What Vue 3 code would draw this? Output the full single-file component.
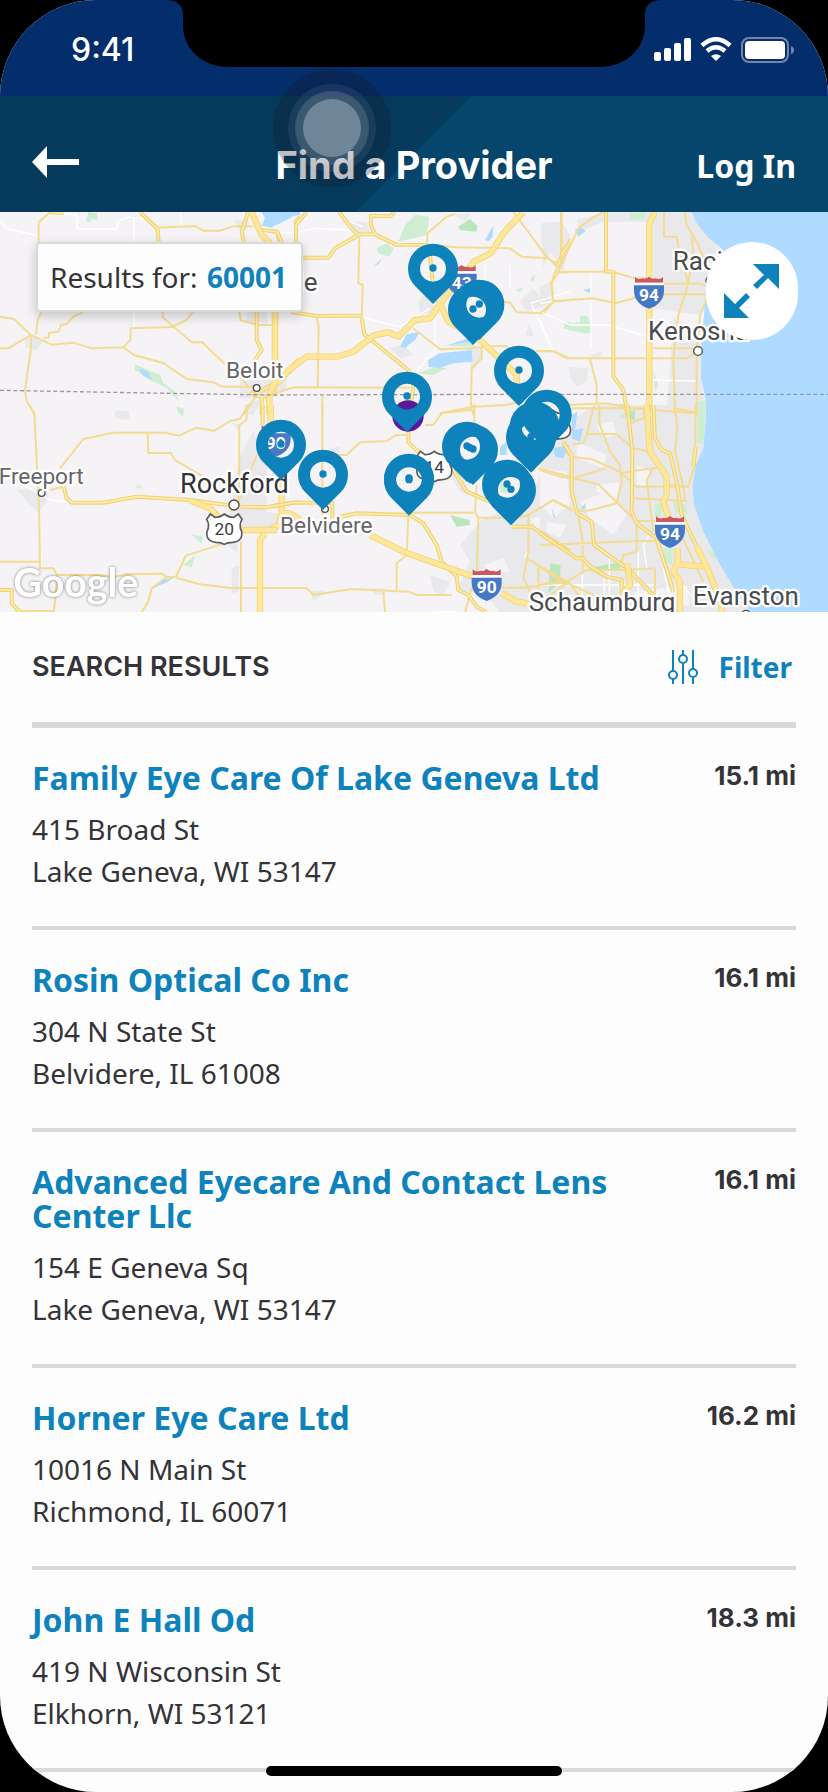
<script setup>
const providers = [
  { name: 'Family Eye Care Of Lake Geneva Ltd', street: '415 Broad St', city: 'Lake Geneva, WI 53147', distance: '15.1 mi' },
  { name: 'Rosin Optical Co Inc', street: '304 N State St', city: 'Belvidere, IL 61008', distance: '16.1 mi' },
  { name: 'Advanced Eyecare And Contact Lens Center Llc', street: '154 E Geneva Sq', city: 'Lake Geneva, WI 53147', distance: '16.1 mi' },
  { name: 'Horner Eye Care Ltd', street: '10016 N Main St', city: 'Richmond, IL 60071', distance: '16.2 mi' },
  { name: 'John E Hall Od', street: '419 N Wisconsin St', city: 'Elkhorn, WI 53121', distance: '18.3 mi' },
]

// The map is made of six tiles; each tile's shapes use its own origin.
const tiles = [
  {
    x: 0, y: -21,
    urban: 'M75 400 105 395 130 410 110 435 75 425ZM740 321 800 321 805 355 740 350ZM705 45 745 45 740 75 710 70ZM720 530 860 515 860 550 790 580 720 580ZM345 618H387V630H345ZM735 600 790 580 760 630 730 630Z',
    green: 'M265 21 290 25 293 45 275 42 270 52 258 50ZM405 478 480 510 490 535 525 560 538 592 500 548 450 525 405 495ZM530 605 552 612 548 630 535 625Z',
    water: 'M415 490 445 500 455 525 430 512ZM785 21H900V30L860 35 838 50 815 68 785 62 795 40Z',
    white: 'M0 50 20 70 116 93M130 22 232 30V72H350L355 48 385 36 430 42M402 36V112M543 21V65M403 321V370M830 80 885 85',
    minor: 'M150 21 116 52V112M473 68 585 63 610 77H660L700 64H760M0 335 42 342 93 390 155 419 220 413 275 430 370 427 392 403V370L515 366 560 345 578 321M0 430H25L93 390M125 321 113 345 108 388M130 400 147 396V383L175 380 183 360 200 357 220 335 250 322M488 321V337L575 412H607L675 478M370 427 402 450 490 474 560 522 640 532 665 545H760M93 390V430L75 555 80 588 105 630M718 321 722 346 775 360H815M825 565 880 547H900M770 570 730 630M720 515 745 545',
    medium: 'M150 21 192 25M420 21 473 72 476 112M745 21 725 80 732 112M785 75 832 80 838 112M900 35 888 50V112M770 321V405L785 435 765 465V480M750 560 770 572 800 575M785 575V630M780 560 815 540',
    highway: 'M755 21 785 90 810 115M825 321V540L808 575V630M825 540 860 505 900 465',
  },
  {
    x: 810, y: -21,
    urban: 'M815 55 875 50 900 90 880 200 835 130 815 120ZM240 50 290 50 300 80 250 85ZM750 290 790 250 825 300 770 320ZM360 430 400 420 430 450 390 460ZM765 390 778 355 792 395ZM445 290 470 260 500 320 450 330ZM550 30 600 25 590 50ZM590 430 640 430 630 470 605 500Z',
    green: 'M435 30 478 35 470 90 385 110 405 60ZM320 130 350 115 370 130 360 155 325 145ZM735 252 760 248 750 262ZM780 225 793 208 793 230ZM440 505 500 485 530 490 490 510ZM880 355 900 350V380ZM530 423 600 412 620 425Z',
    park: 'M565 65 600 42 622 62 620 80 570 75Z',
    water: 'M310 185 340 155 325 178ZM645 105 670 62 668 95 655 108ZM390 425 410 388 450 380 435 405 405 428ZM475 465 510 445 605 435 608 470 550 475 505 490 475 485ZM525 423 600 398 605 410ZM0 21H80L60 40 20 60 0 55Z',
    white: 'M90 80 130 70 240 75M240 50 280 65M280 338 390 365 480 310M780 295 900 260M785 300 850 440M645 180V290M495 340V440L470 460 440 500M720 180V250',
    minor: 'M470 120 560 127 720 130 755 155 835 160 862 185M555 27 530 35 472 85V120M268 90 265 235 278 240 275 340M140 338 146 365 143 545M430 370 510 433 600 430 680 423H710L715 440 850 438 900 460M635 430V460L605 490 603 600 610 630M0 570 70 547 420 548M510 625 610 605 710 600 745 590M730 21 830 155M900 100 862 185 845 230 850 290 820 325 740 322 720 293 700 290M862 203 900 201M875 21V180M850 290 900 285M157 572V630',
    medium: 'M110 21 78 60V112M95 158H175L195 130 240 105 265 90 240 65 208 21M265 88H315L378 119 472 120M315 88 303 62V32L360 34 375 21M0 78 22 80 35 112M65 321 138 333 275 332M275 340 283 388 420 500M430 540 425 590M480 150 488 230M862 185 880 140 900 110',
    highway: 'M15 321V530L0 560M760 21 700 85 662 145 612 170 515 290 480 340 435 345 385 395 355 382 310 392 250 440 200 455H110L50 500M505 285 535 350 620 395 740 510V535',
  },
  {
    x: 1620, y: -21,
    urban: 'M340 21H455L505 98 560 150 510 300 480 330 340 310ZM110 45 200 21H330V50H190L120 80ZM5 55 65 50 70 90 30 140 10 190ZM85 485 145 490 140 530 110 545 90 515ZM400 340 490 400 483 520 498 630H380ZM0 245 30 230 40 290 0 310ZM150 450 185 440 175 465Z',
    green: 'M75 355 120 352V332H142L155 365V385H130L70 370ZM270 25 315 21V40L270 45ZM340 500 355 540 345 560ZM475 590 498 585V630H478ZM240 595 262 600V630H245Z',
    water: 'M105 75 120 65 137 78 115 95ZM130 255 150 250V265Z',
    white: 'M0 320 90 360 200 360 330 395M153 200V430M340 525 470 528M0 345 40 440M0 295 40 290',
    minor: 'M63 21V185M190 21 155 40 115 70 50 210 33 235 40 290 0 325M50 200H215L285 220H320M372 21V95H410L420 150 445 235 415 330 400 460 405 630M435 21 440 60 475 120 490 160M340 236H480L497 243M340 268H505M500 280 480 330 470 440V630M40 288 160 280 225 295 300 275H330M0 438H40L80 460H440L470 440M340 430H460M150 462 170 540V600M455 95 460 150 445 230M80 600 200 595 280 610 460 625M0 130 30 165 55 175',
    medium: 'M198 21V200H220V515L250 555 262 630',
    highway: 'M345 21 328 55V590L318 630',
  },
  {
    x: 0, y: 579,
    urban: 'M345 20H387V45L345 40ZM50 255 140 250 145 280 115 325ZM402 250 415 235 430 250ZM720 150 760 80 800 180 800 320 870 330 870 375 700 370 690 330ZM660 400H715L710 445ZM695 490 718 480 715 560 695 565ZM690 50 720 60 715 75Z',
    green: 'M532 5 552 12 548 38ZM575 388 610 395 603 415ZM550 480 585 450 575 487Z',
    water: 'M455 552 490 525 525 516 500 532Z',
    white: 'M80 245 150 285 215 293',
    minor: 'M88 0 103 28 117 300 120 490H160L172 512 162 621M180 190 250 102 340 83H495L538 92 588 68 643 77 690 48 720 42 745 0M443 83 445 144H512L525 165 610 215M740 0V45L718 60 717 300M0 470H118M170 510H300L340 516 380 508 485 506 500 516H527L545 480 557 452 690 410M500 516 455 550 445 590 425 621M527 518 600 538 690 549H900M723 410V621M45 618H162M770 150 725 270 690 320M150 255 190 245M0 215 60 225',
    medium: 'M0 555H35V595L60 621M188 235 200 280 215 293H310L410 275 570 285 620 292 720 305 800 307 840 298 900 292M788 0V60',
    highway: 'M812 0V60M570 287 630 310 655 335M725 375H810L835 360 845 325V220M845 325H870L900 345M795 385 780 405V621',
  },
  {
    x: 810, y: 579,
    urban: 'M640 340 770 300 820 190 900 170V621H690L640 560 560 560 600 470 570 420ZM480 510 540 530 520 570 490 560ZM180 130 210 125 205 150H180ZM120 560 160 555V570L130 585ZM310 550H345V570H310ZM540 200 570 190 600 270 570 260Z',
    land: 'M850 180 900 170V260L860 270ZM640 480 700 460 720 500 660 500ZM780 340 840 330 880 390 800 370Z',
    green: 'M815 215 850 210 845 240 815 240ZM690 235 715 240 710 265 692 262Z',
    park: 'M540 330 598 345 600 360 560 365ZM840 475 875 480 870 530 835 540Z',
    water: 'M690 125 710 110V150H690ZM850 115 900 90V130L880 160 850 150ZM845 300 860 345 850 320ZM820 415 855 400 835 405Z',
    white: 'M765 460 772 440M495 621H560',
    minor: 'M157 0V330M175 150H230L270 112 350 108 380 90H410M465 60H490L515 25 600 15 613 0V70M415 260V330L410 450 380 475V555M425 323H610M625 338H740L775 330 850 285 900 310M620 240 615 320 625 340 620 520 605 550 585 621M0 549H110L130 570 245 552 415 560 440 570H545M340 560 345 621M775 330V440L760 520 780 560M770 460 900 535M697 548H775L880 525M805 480V621M875 417H900M805 190 900 215',
    medium: 'M415 80V112L450 145M550 195 590 260 660 290M0 305 70 293H187V340L260 325 420 330 460 355 500 420 515 470 560 515 565 555 595 570 620 605 650 621M725 365H785L900 440M880 110 900 150',
    highway: 'M300 390 400 440 610 515M695 565 740 590 790 598M0 375H20',
  },
  {
    x: 1620, y: 579,
    urban: 'M0 180 100 40 170 0H500L490 130 458 240 490 380 540 480 630 621H0Z',
    land: 'M0 190 80 200 90 300 40 340 0 300ZM120 290 200 260 260 330 220 390 150 340ZM110 110 200 150 190 190 110 160ZM170 240 240 230 230 290 170 260ZM20 350 80 360 60 400 20 380ZM290 180 330 200 320 240 290 240ZM170 60 220 50 230 90 190 100ZM280 560 440 540 450 600 300 600Z',
    green: 'M238 30 285 15 282 45 245 40ZM475 0H497L490 118 472 115ZM345 295 370 300 360 340H345ZM400 290 440 300V325L405 320ZM370 430H400L395 480 375 470ZM505 435 525 445 530 462 507 450Z',
    park: 'M165 485 235 473 240 490 180 500ZM30 475 62 480 60 530 25 565ZM262 18 285 15V45H262Z',
    water: 'M95 30 112 20 105 75 130 70 120 110 95 100ZM40 130 90 120 70 160 45 155ZM35 305 48 345 40 335ZM120 315 135 295 138 310Z',
    white: 'M330 385 310 420 322 495M208 460V570M0 540H350M295 440V590M370 490 385 560M127 510V580M193 510V590M430 545 470 590',
    minor: 'M95 10H330M400 10 465 22M405 0 412 70 405 140 430 245 435 290M467 0 465 180 445 245H290L245 205M162 0 140 90 130 115 98 118M140 87H228L280 130 330 140M100 157 155 162 245 203 370 185M100 220 195 190M0 195 60 215 100 220 175 238 290 350M178 0V55L210 140 240 180 245 230 230 295 155 315 110 320M340 190 320 225 340 380M0 310 38 285 100 318M280 280 440 288M290 348H345M115 330 128 410V500M0 420 300 408H350M290 350V440L250 450 240 490M0 485 50 520 160 570M0 540 80 530 140 495H260L340 490M345 490V570M420 380 490 530M385 240 430 245M20 580 85 530 130 590M150 490 200 520M260 60 330 30',
    medium: 'M262 0 277 140 275 320 290 355 350 400 400 560M72 115 95 150V260L112 325 155 350 162 420 262 490 340 570M0 385 110 460H130L145 480 200 515 245 525V560M340 0 345 100 365 135 390 145 410 230 425 330 470 425M467 125 460 185M352 410 395 540',
    highway: 'M320 0 330 140 380 215V270L370 290 385 335M413 430V470L400 500 420 530V621M413 478 495 485M470 425 500 485 545 600V621M262 475 270 540 245 570',
  },
]

const interstates = [
  { x: 1340, y: 159, n: '43' },
  { x: 1902, y: 194, n: '94' },
  { x: 782, y: 638, n: '90' },
  { x: 1965, y: 912, n: '94' },
  { x: 1415, y: 1071, n: '90' },
]
const usRoutes = [
  { x: 617, y: 904, n: '20' },
  { x: 1247, y: 716, n: '14' },
  { x: 1603, y: 593, n: '12' },
]
const towns = [
  { x: 953, y: 237, name: 'le', size: 'm', end: true },
  { x: 678, y: 499, name: 'Beloit', size: 's' },
  { x: -4, y: 815, name: 'Freeport', size: 's' },
  { x: 540, y: 844, name: 'Rockford', size: 'l', dark: true },
  { x: 840, y: 964, name: 'Belvidere', size: 's' },
  { x: 2018, y: 174, name: 'Racine', size: 'm' },
  { x: 1944, y: 384, name: 'Kenosha', size: 'm' },
  { x: 1586, y: 1196, name: 'Schaumburg', size: 'm' },
  { x: 2078, y: 1179, name: 'Evanston', size: 'm' },
]
const dots = [
  { x: 770, y: 528, r: 10 },
  { x: 125, y: 843, r: 10 },
  { x: 702, y: 879, r: 15 },
  { x: 2094, y: 417, r: 13 },
  { x: 975, y: 891, r: 10 },
  { x: 2130, y: 206, r: 12 },
  { x: 2238, y: 1208, r: 13 },
]
const pins = [
  [1299, 276], [1419, 399], [1438, 384], [1557, 582], [1221, 660],
  [843, 804], [969, 894], [1227, 911], [1227, 906],
  [1401, 810], [1410, 815], [1419, 819], [1640, 714],
  [1604, 750], [1593, 782], [1521, 924], [1533, 940],
]
</script>

<template>
  <div class="device">
    <div class="status">
      <span class="time">9:41</span>
      <svg class="notch" viewBox="0 0 496 67" aria-hidden="true">
        <path d="M0 0C11 0 17 5 17 14V27C18 50 37 67 63 67H433C459 67 478 50 479 27V14C479 5 485 0 496 0Z" />
      </svg>
      <div class="indicators">
        <svg width="38" height="26" viewBox="0 0 38 26" aria-hidden="true">
          <g fill="#fff">
            <rect x="0" y="15" width="7" height="9" rx="2" /><rect x="10" y="11" width="7" height="13" rx="2" />
            <rect x="20" y="6" width="7" height="18" rx="2" /><rect x="30" y="1" width="7" height="23" rx="2" />
          </g>
        </svg>
        <svg width="32" height="26" viewBox="0 0 32 26" aria-hidden="true">
          <path d="M2 8.500Q16-4 30 8.500M7 14Q16 6.500 25 14" fill="none" stroke="#fff" stroke-width="4.500" />
          <path d="M11 19Q16 15.500 21 19L16 24Z" fill="#fff" />
        </svg>
        <svg width="54" height="26" viewBox="0 0 54 26" aria-hidden="true">
          <rect x="2" y="1" width="46" height="24" rx="7" fill="none" stroke="#7186aa" stroke-width="2" />
          <rect x="5" y="4" width="40" height="18" rx="4" fill="#fff" />
          <path d="M51 9Q54 10 54 13T51 17Z" fill="#7186aa" />
        </svg>
      </div>
    </div>

    <header class="bar">
      <button class="back" type="button" aria-label="Back">
        <svg width="48" height="38" viewBox="0 0 48 38" aria-hidden="true">
          <path d="M0 16 15 0V13H47V19H15V32Z" fill="#fff" />
        </svg>
      </button>
      <h1>Find a Provider</h1>
      <a class="login" href="#login">Log In</a>
    </header>
    <div class="touch" aria-hidden="true"><i><i><i></i></i></i></div>

    <section class="map" aria-label="Map of results">
      <svg class="canvas" viewBox="0 0 2484 1200" preserveAspectRatio="xMidYMid slice">
        <rect width="2484" height="1200" fill="#f5f3f6" />
        <g v-for="(t, i) in tiles" :key="'a' + i" :transform="`translate(${t.x} ${t.y})`">
          <path :d="t.urban" fill="#e9e8ea" />
          <path v-if="t.land" :d="t.land" fill="#f5f3f6" />
          <path :d="t.green" fill="#cdeed0" />
          <path v-if="t.park" :d="t.park" fill="#b9e6ba" />
          <path :d="t.water" fill="#aedbff" />
        </g>
        <path d="M2075 0 2090 34 2125 77 2165 110 2150 209 2115 279 2105 379 2103 499 2118 569V609L2110 709 2088 759 2078 819 2082 879 2110 959 2160 1059 2200 1124 2250 1200H2484V0Z" fill="#aedbff" />
        <g v-for="(t, i) in tiles" :key="'b' + i" :transform="`translate(${t.x} ${t.y})`" class="roads">
          <path :d="t.white" class="white" />
          <path :d="t.minor" class="minor" />
          <path :d="t.medium" class="medium-edge" />
          <path :d="t.medium" class="medium" />
          <path :d="t.highway" class="highway-edge" />
          <path :d="t.highway" class="highway" />
        </g>
        <path d="M0 535 450 543 810 549 1500 547H2484" class="border" />
        <g class="dots"><circle v-for="d in dots" :key="d.x" :cx="d.x" :cy="d.y" :r="d.r" /></g>
        <text
          v-for="t in towns" :key="t.name" :x="t.x" :y="t.y"
          :class="['town', t.size, { dark: t.dark, end: t.end }]"
        >{{ t.name }}</text>
        <g v-for="s in interstates" :key="s.x" :transform="`translate(${s.x} ${s.y})`">
          <path d="M3 18V1L10 6Q18 9 26 5 36 9 45 0 54 9 64 5 72 9 80 6L87 1V18Z" fill="#cb5861" />
          <path d="M3 18H87L90 26H0Z" fill="#fff" />
          <path d="M0 26H90V42C90 70 70 88 45 96 20 88 0 70 0 42Z" fill="#4579c6" />
          <text x="45" y="73" class="route">{{ s.n }}</text>
        </g>
        <g v-for="s in usRoutes" :key="s.x" :transform="`translate(${s.x} ${s.y})`">
          <path d="M14 2 28 12Q44 12 56 2 68 12 84 12L98 2 109 18Q98 36 108 54 112 85 80 87 65 87 56 93 47 87 32 87 0 85 4 54 14 36 3 18Z" fill="#fff" stroke="#5b5b5f" stroke-width="5" />
          <text x="56" y="66" class="route us">{{ s.n }}</text>
        </g>
        <text x="40" y="1156" class="brand">Google</text>
        <circle cx="1224" cy="612" r="47" fill="#5a189a" />
        <g v-for="(p, i) in pins" :key="'p' + i" :transform="`translate(${p[0]} ${p[1]})`" fill="#0e82bb">
          <path fill-rule="evenodd" d="M0 0-53-53A75 75 0 1 1 53-53ZM0-145A39 39 0 1 0 0-67 39 39 0 1 0 0-145Z" />
          <circle cx="0" cy="-108" r="11" />
        </g>
      </svg>
      <div class="query">Results for: <a href="#zip">60001</a></div>
      <button class="expand" type="button" aria-label="Expand map">
        <svg width="56" height="56" viewBox="0 0 56 56" aria-hidden="true">
          <path d="M29 1 55 1V26L44 15 33 26 29 22 40 12ZM0 30 11 41 22 30 26 34 15 45 25 55H0Z" fill="#0e82bb" />
        </svg>
      </button>
    </section>

    <main>
      <div class="heading">
        <h2>SEARCH RESULTS</h2>
        <button class="filter" type="button">
          <svg width="32" height="34" viewBox="0 0 32 34" fill="none" stroke="#0e82bb" stroke-width="2" aria-hidden="true">
            <path d="M6 0V20M6 29V34M16 0V4M16 14V34M26 0V18M26 28V34" />
            <circle cx="6" cy="25" r="4" /><circle cx="16" cy="9" r="4" /><circle cx="26" cy="23" r="4" />
          </svg>
          Filter
        </button>
      </div>
      <ul>
        <li v-for="p in providers" :key="p.name">
          <div class="info">
            <h3><a href="#provider">{{ p.name }}</a></h3>
            <address>{{ p.street }}<br>{{ p.city }}</address>
          </div>
          <span class="distance">{{ p.distance }}</span>
        </li>
      </ul>
    </main>
    <div class="home" aria-hidden="true"></div>
  </div>
</template>

<style>
body {
  background: #000;
}
</style>

<style scoped>
.device {
  position: relative;
  box-sizing: border-box;
  min-height: 100vh;
  padding-bottom: 20px;
  overflow: hidden;
  border-radius: 96px;
  background: #fefdfe;
  color: #343337;
  font-family: "Noto Sans", sans-serif;
  font-size: 28px;
}
h1, h2, h3, ul, address {
  margin: 0;
  padding: 0;
  font-style: normal;
}
a {
  color: #0e82bb;
  text-decoration: none;
}
button {
  border: 0;
  padding: 0;
  background: none;
  font: inherit;
  cursor: pointer;
}
svg {
  display: block;
}
.status {
  position: relative;
  display: flex;
  justify-content: space-between;
  align-items: center;
  box-sizing: border-box;
  height: 96px;
  padding: 4px 34px 0 71px;
  background: #042d6b;
  color: #fff;
}
.time {
  font: 500 32px/40px Inter, sans-serif;
}
.notch {
  position: absolute;
  top: 0;
  left: 50%;
  width: 496px;
  transform: translateX(-50%);
}
.indicators {
  display: flex;
  gap: 8px;
}
.bar {
  display: grid;
  grid-template-columns: 1fr auto 1fr;
  align-items: center;
  box-sizing: border-box;
  height: 116px;
  padding: 22px 32px 0;
  background: linear-gradient(135deg, #053a5d 50%, #07466c 50%);
  color: #fff;
}
.back {
  justify-self: start;
}
.bar h1 {
  font: 700 38px/48px Inter, sans-serif;
}
.login {
  justify-self: end;
  color: #fff;
  font-size: 32px;
  font-weight: 700;
}
.touch, .touch i {
  display: grid;
  place-items: center;
  border-radius: 50%;
}
.touch {
  position: absolute;
  top: 69px;
  left: calc(50% - 82px);
  width: 118px;
  height: 118px;
  transform: translateX(-50%);
  background: rgba(23, 25, 35, 0.28);
}
.touch i {
  width: 88px;
  height: 88px;
  background: rgba(255, 255, 255, 0.07);
}
.touch i i {
  width: 74px;
  height: 74px;
  background: rgba(255, 255, 255, 0.14);
}
.touch i i i {
  width: 58px;
  height: 58px;
  background: #6f8598;
}
.map {
  position: relative;
  height: 400px;
  overflow: hidden;
}
.canvas {
  width: 100%;
  height: 100%;
}
.roads path {
  fill: none;
  stroke-linejoin: round;
}
.roads .white { stroke: #fff; stroke-width: 4; }
.roads .minor { stroke: #f3dc92; stroke-width: 6; }
.roads .medium-edge { stroke: #f0d376; stroke-width: 12; }
.roads .medium { stroke: #fdecab; stroke-width: 5; }
.roads .highway-edge { stroke: #f2d474; stroke-width: 19; }
.roads .highway { stroke: #fee79a; stroke-width: 14; }
.border {
  fill: none;
  stroke: #98979b;
  stroke-width: 4;
  stroke-dasharray: 12 8;
}
.dots circle {
  fill: #fff;
  stroke: #4a4a4e;
  stroke-width: 4;
}
.town {
  fill: #4b4b4f;
  stroke: #fff;
  stroke-width: 14;
  stroke-linejoin: round;
  paint-order: stroke;
  font-family: Roboto, sans-serif;
}
.town.s { fill: #656569; font-size: 68px; }
.town.m { font-size: 78px; }
.town.l { font-size: 81px; }
.town.dark { fill: #333337; }
.town.end { text-anchor: end; }
.route {
  fill: #fff;
  font: 700 52px Roboto, sans-serif;
  text-anchor: middle;
}
.route.us {
  fill: #3c3c40;
  font-weight: 400;
}
.brand {
  fill: #fff;
  filter: drop-shadow(0 0 5px rgba(0, 0, 0, 0.5));
  font: 700 118px Lato, sans-serif;
}
.query {
  position: absolute;
  top: 30px;
  left: 36px;
  border: 2px solid #d9d9d6;
  border-radius: 4px;
  padding: 0 14px 0 12px;
  background: #fefdfe;
  box-shadow: 0 4px 12px rgba(0, 0, 0, 0.2);
  line-height: 66px;
}
.query a {
  margin-left: 2px;
  font-weight: 700;
}
.expand {
  position: absolute;
  top: 30px;
  right: 30px;
  display: grid;
  place-items: center;
  width: 92px;
  height: 98px;
  border-radius: 46px;
  background: #fefefe;
}
main {
  padding: 0 32px;
}
.heading {
  display: flex;
  justify-content: space-between;
  align-items: center;
  height: 110px;
  padding-right: 4px;
  border-bottom: 6px solid #d9d9d6;
}
.heading h2 {
  font: 600 27px/40px Inter, sans-serif;
}
.filter {
  display: flex;
  align-items: center;
  gap: 20px;
  color: #0e82bb;
  font-weight: 700;
}
li {
  display: flex;
  justify-content: space-between;
  padding: 33px 0 34px;
  border-bottom: 4px solid #d9d9d6;
  list-style: none;
}
.info {
  flex: 0 1 600px;
}
h3 {
  margin-bottom: 13px;
  font-size: 32px;
  line-height: 34px;
}
address {
  line-height: 42px;
}
.distance {
  flex: none;
  font: 700 26px/30px Inter, sans-serif;
}
.home {
  position: absolute;
  bottom: 16px;
  left: 50%;
  width: 296px;
  height: 10px;
  border-radius: 5px;
  background: #000;
  transform: translateX(-50%);
}
</style>
